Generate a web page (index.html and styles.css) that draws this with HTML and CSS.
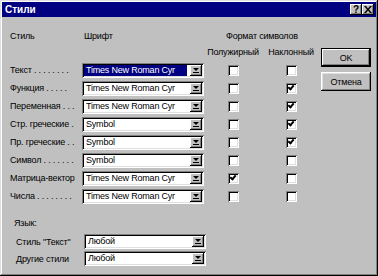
FILE: index.html
```html
<!DOCTYPE html>
<html lang="ru">
<head>
    <meta charset="UTF-8">
    <title>Стили</title>
    <link rel="stylesheet" href="styles.css">
</head>
<body>
    <div class="window">
        <div class="titlebar">
            <span class="title">Стили</span>
            <div class="title-buttons">
                <span class="tbtn help">?</span>
                <span class="tbtn close">
                    <svg width="8" height="7" viewBox="0 0 8 7"><path d="M0 0h2l2 2.5L6 0h2L5 3.5 8 7H6L4 4.5 2 7H0l3-3.5z" fill="#000"/></svg>
                </span>
            </div>
        </div>

        <div class="content">
            <div class="main">
                <div class="styles-grid">
                    <div class="hdr">Стиль</div>
                    <div class="hdr">Шрифт</div>
                    <div class="hdr format">Формат символов</div>

                    <div></div>
                    <div></div>
                    <div class="subhdr">Полужирный</div>
                    <div class="subhdr">Наклонный</div>

                    <div class="label">Текст . . . . . . . .</div>
                    <div class="cell"><div class="combo"><span class="value selected">Times New Roman Cyr</span><span class="arrow"></span></div></div>
                    <div class="cell center"><span class="check"></span></div>
                    <div class="cell center"><span class="check"></span></div>

                    <div class="label">Функция . . . . .</div>
                    <div class="cell"><div class="combo"><span class="value">Times New Roman Cyr</span><span class="arrow"></span></div></div>
                    <div class="cell center"><span class="check"></span></div>
                    <div class="cell center"><span class="check checked"></span></div>

                    <div class="label">Переменная . . .</div>
                    <div class="cell"><div class="combo"><span class="value">Times New Roman Cyr</span><span class="arrow"></span></div></div>
                    <div class="cell center"><span class="check"></span></div>
                    <div class="cell center"><span class="check checked"></span></div>

                    <div class="label">Стр. греческие .</div>
                    <div class="cell"><div class="combo"><span class="value">Symbol</span><span class="arrow"></span></div></div>
                    <div class="cell center"><span class="check"></span></div>
                    <div class="cell center"><span class="check checked"></span></div>

                    <div class="label">Пр. греческие . .</div>
                    <div class="cell"><div class="combo"><span class="value">Symbol</span><span class="arrow"></span></div></div>
                    <div class="cell center"><span class="check"></span></div>
                    <div class="cell center"><span class="check checked"></span></div>

                    <div class="label">Символ . . . . . . .</div>
                    <div class="cell"><div class="combo"><span class="value">Symbol</span><span class="arrow"></span></div></div>
                    <div class="cell center"><span class="check"></span></div>
                    <div class="cell center"><span class="check"></span></div>

                    <div class="label">Матрица-вектор</div>
                    <div class="cell"><div class="combo"><span class="value">Times New Roman Cyr</span><span class="arrow"></span></div></div>
                    <div class="cell center"><span class="check checked"></span></div>
                    <div class="cell center"><span class="check"></span></div>

                    <div class="label">Числа . . . . . . . .</div>
                    <div class="cell"><div class="combo"><span class="value">Times New Roman Cyr</span><span class="arrow"></span></div></div>
                    <div class="cell center"><span class="check"></span></div>
                    <div class="cell center"><span class="check"></span></div>
                </div>

                <div class="language">
                    <div class="lang-title">Язык:</div>
                    <div class="lang-row">
                        <div class="lang-label">Стиль "Текст"</div>
                        <div class="combo"><span class="value">Любой</span><span class="arrow"></span></div>
                    </div>
                    <div class="lang-row">
                        <div class="lang-label">Другие стили</div>
                        <div class="combo"><span class="value">Любой</span><span class="arrow"></span></div>
                    </div>
                </div>
            </div>

            <div class="buttons">
                <button type="button" class="btn default">OK</button>
                <button type="button" class="btn">Отмена</button>
            </div>
        </div>
    </div>
</body>
</html>
```

FILE: styles.css
```css
body {
    margin: 0;
    background-color: #c0c0c0;
    font-family: "Liberation Sans", Arial, sans-serif;
    font-size: 9px;
    letter-spacing: -0.2px;
    color: #000;
}

.window {
    width: 378px;
    height: 276px;
    box-sizing: border-box;
    padding: 2px;
    background-color: #c0c0c0;
    box-shadow: inset -1px -1px #000, inset 1px 1px #dfdfdf, inset -2px -2px #808080, inset 2px 2px #fff;
}

.titlebar {
    height: 15px;
    background-color: #000080;
    color: #fff;
    display: flex;
    align-items: center;
    justify-content: space-between;
    padding: 0 2px 0 2px;
}

.title {
    font-weight: bold;
    font-size: 10px;
    letter-spacing: 0;
    padding-left: 1px;
}

.title-buttons {
    display: flex;
}

.tbtn {
    width: 12px;
    height: 11px;
    background-color: #c0c0c0;
    color: #000;
    display: flex;
    align-items: center;
    justify-content: center;
    box-sizing: border-box;
    box-shadow: inset -1px -1px #000, inset 1px 1px #fff, inset -2px -2px #808080;
    font-weight: bold;
    font-size: 10px;
    letter-spacing: 0;
    line-height: 11px;
}

.tbtn svg {
    display: block;
    margin-top: -1px;
}

.content {
    display: flex;
}

.main {
    padding-left: 6px;
}

.styles-grid {
    display: grid;
    grid-template-columns: 74px 122px 58px 58px;
    grid-template-rows: 14px 18px repeat(8, 18px);
    padding-top: 12px;
}

.hdr {
    line-height: 14px;
    padding-left: 2px;
}

.hdr.format {
    grid-column: span 2;
    text-align: center;
    padding-left: 0;
}

.subhdr {
    line-height: 18px;
    text-align: center;
}

.label {
    line-height: 18px;
    white-space: nowrap;
    overflow: hidden;
    padding-left: 2px;
}

.cell {
    display: flex;
    align-items: center;
}

.cell.center {
    justify-content: center;
}

.combo {
    width: 122px;
    height: 15px;
    box-sizing: border-box;
    padding: 2px;
    background-color: #fff;
    display: flex;
    align-items: stretch;
    box-shadow: inset 1px 1px #808080, inset -1px -1px #fff, inset 2px 2px #000, inset -2px -2px #dfdfdf;
}

.value {
    flex: 1;
    line-height: 11px;
    padding-left: 2px;
    white-space: nowrap;
}

.value.selected {
    flex: none;
    width: 101px;
    background-color: #000080;
    color: #fff;
}

.arrow {
    margin-left: auto;
    width: 12px;
    box-sizing: border-box;
    background-color: #c0c0c0;
    box-shadow: inset -1px -1px #000, inset 1px 1px #fff, inset -2px -2px #808080;
    position: relative;
}

.arrow::before {
    content: "";
    position: absolute;
    left: 3px;
    top: 3px;
    border-left: 3px solid transparent;
    border-right: 3px solid transparent;
    border-top: 3px solid #000;
}

.arrow::after {
    content: "";
    position: absolute;
    left: 3px;
    top: 7px;
    width: 6px;
    height: 1px;
    background-color: #000;
}

.check {
    width: 11px;
    height: 11px;
    box-sizing: border-box;
    background-color: #fff;
    box-shadow: inset 1px 1px #808080, inset -1px -1px #fff, inset 2px 2px #000, inset -2px -2px #dfdfdf;
    position: relative;
}

.check.checked::after {
    content: "";
    position: absolute;
    left: 3px;
    top: 1px;
    width: 2px;
    height: 4px;
    border-right: 2px solid #000;
    border-bottom: 2px solid #000;
    transform: rotate(40deg);
}

.language {
    padding-top: 11px;
    padding-left: 6px;
}

.lang-title {
    line-height: 14px;
    margin-bottom: 3px;
}

.lang-row {
    display: flex;
    align-items: center;
    height: 17px;
}

.lang-label {
    width: 70px;
    padding-left: 2px;
    box-sizing: border-box;
    white-space: nowrap;
}

.buttons {
    display: flex;
    flex-direction: column;
    gap: 5px;
    padding-top: 31px;
    margin-left: 1px;
}

.btn {
    width: 50px;
    height: 19px;
    padding: 0;
    border: none;
    background-color: #c0c0c0;
    font-family: "Liberation Sans", Arial, sans-serif;
    font-size: 9px;
    letter-spacing: -0.2px;
    color: #000;
    box-shadow: inset -1px -1px #000, inset 1px 1px #fff, inset -2px -2px #808080, inset 2px 2px #dfdfdf;
}

.btn.default {
    box-shadow: inset 0 0 0 1px #000, inset -2px -2px #000, inset 2px 2px #fff, inset -3px -3px #808080;
}
```
